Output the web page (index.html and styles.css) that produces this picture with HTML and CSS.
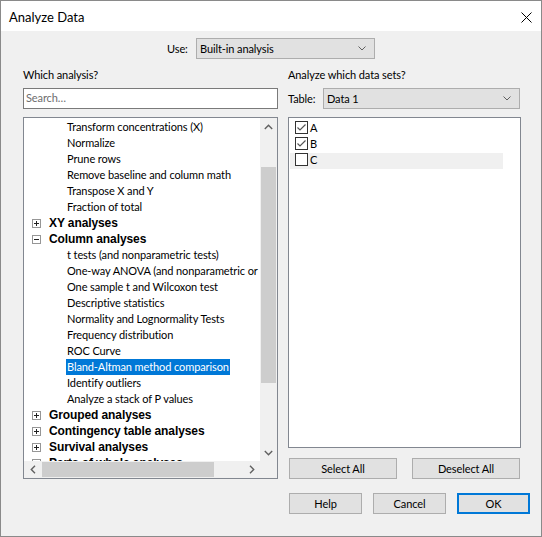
FILE: index.html
```html
<!DOCTYPE html>
<html lang="en">
<head>
<meta charset="utf-8">
<title>Analyze Data</title>
<link rel="stylesheet" href="styles.css">
</head>
<body>
<div class="window">
  <div class="titlebar">
    <span class="title">Analyze Data</span>
    <span class="close">
      <svg width="11" height="11" viewBox="0 0 11 11"><path d="M0.5 0.5 L10.5 10.5 M10.5 0.5 L0.5 10.5" stroke="#000" stroke-width="1" fill="none"/></svg>
    </span>
  </div>

  <div class="content">
    <div class="use-row">
      <span class="field-label use-label">Use:</span>
      <div class="combo use-combo">
        <span class="combo-text">Built-in analysis</span>
        <svg class="combo-arrow" width="8" height="5" viewBox="0 0 8 5"><path d="M0.5 0.5 L4 4 L7.5 0.5" stroke="#606060" stroke-width="1" fill="none"/></svg>
      </div>
    </div>

    <div class="columns">
      <div class="col col-left">
        <div class="caption">Which analysis?</div>
        <div class="search">Search…</div>
        <div class="tree">
          <div class="tree-main">
            <div class="tree-view">
              <div class="tree-items">
                <div class="row child"><span class="label">Transform concentrations (X)</span></div>
                <div class="row child"><span class="label">Normalize</span></div>
                <div class="row child"><span class="label">Prune rows</span></div>
                <div class="row child"><span class="label">Remove baseline and column math</span></div>
                <div class="row child"><span class="label">Transpose X and Y</span></div>
                <div class="row child"><span class="label">Fraction of total</span></div>
                <div class="row group">
                  <svg class="expander" width="9" height="9" viewBox="0 0 9 9"><rect x="0.5" y="0.5" width="8" height="8" fill="#fff" stroke="#969696"/><path d="M2 4.5 H7 M4.5 2 V7" stroke="#222" stroke-width="1"/></svg>
                  <span class="label">XY analyses</span>
                </div>
                <div class="row group">
                  <svg class="expander" width="9" height="9" viewBox="0 0 9 9"><rect x="0.5" y="0.5" width="8" height="8" fill="#fff" stroke="#969696"/><path d="M2 4.5 H7" stroke="#222" stroke-width="1"/></svg>
                  <span class="label">Column analyses</span>
                </div>
                <div class="row child"><span class="label">t tests (and nonparametric tests)</span></div>
                <div class="row child"><span class="label">One-way ANOVA (and nonparametric or mixed)</span></div>
                <div class="row child"><span class="label">One sample t and Wilcoxon test</span></div>
                <div class="row child"><span class="label">Descriptive statistics</span></div>
                <div class="row child"><span class="label">Normality and Lognormality Tests</span></div>
                <div class="row child"><span class="label">Frequency distribution</span></div>
                <div class="row child"><span class="label">ROC Curve</span></div>
                <div class="row child"><span class="label selected">Bland-Altman method comparison</span></div>
                <div class="row child"><span class="label">Identify outliers</span></div>
                <div class="row child"><span class="label">Analyze a stack of P values</span></div>
                <div class="row group">
                  <svg class="expander" width="9" height="9" viewBox="0 0 9 9"><rect x="0.5" y="0.5" width="8" height="8" fill="#fff" stroke="#969696"/><path d="M2 4.5 H7 M4.5 2 V7" stroke="#222" stroke-width="1"/></svg>
                  <span class="label">Grouped analyses</span>
                </div>
                <div class="row group">
                  <svg class="expander" width="9" height="9" viewBox="0 0 9 9"><rect x="0.5" y="0.5" width="8" height="8" fill="#fff" stroke="#969696"/><path d="M2 4.5 H7 M4.5 2 V7" stroke="#222" stroke-width="1"/></svg>
                  <span class="label">Contingency table analyses</span>
                </div>
                <div class="row group">
                  <svg class="expander" width="9" height="9" viewBox="0 0 9 9"><rect x="0.5" y="0.5" width="8" height="8" fill="#fff" stroke="#969696"/><path d="M2 4.5 H7 M4.5 2 V7" stroke="#222" stroke-width="1"/></svg>
                  <span class="label">Survival analyses</span>
                </div>
                <div class="row group">
                  <svg class="expander" width="9" height="9" viewBox="0 0 9 9"><rect x="0.5" y="0.5" width="8" height="8" fill="#fff" stroke="#969696"/><path d="M2 4.5 H7 M4.5 2 V7" stroke="#222" stroke-width="1"/></svg>
                  <span class="label">Parts of whole analyses</span>
                </div>
              </div>
            </div>
            <div class="vscroll">
              <div class="sb-btn">
                <svg width="9" height="6" viewBox="0 0 9 6"><path d="M0.8 5 L4.5 1.3 L8.2 5" stroke="#606060" stroke-width="1.4" fill="none"/></svg>
              </div>
              <div class="sb-track vtrack"><div class="vthumb"></div></div>
              <div class="sb-btn">
                <svg width="9" height="6" viewBox="0 0 9 6"><path d="M0.8 1 L4.5 4.7 L8.2 1" stroke="#606060" stroke-width="1.4" fill="none"/></svg>
              </div>
            </div>
          </div>
          <div class="tree-bottom">
            <div class="hscroll">
              <div class="sb-btn">
                <svg width="6" height="9" viewBox="0 0 6 9"><path d="M5 0.8 L1.3 4.5 L5 8.2" stroke="#606060" stroke-width="1.4" fill="none"/></svg>
              </div>
              <div class="sb-track htrack"><div class="hthumb"></div></div>
              <div class="sb-btn">
                <svg width="6" height="9" viewBox="0 0 6 9"><path d="M1 0.8 L4.7 4.5 L1 8.2" stroke="#606060" stroke-width="1.4" fill="none"/></svg>
              </div>
            </div>
            <div class="corner"></div>
          </div>
        </div>
      </div>

      <div class="col col-right">
        <div class="caption">Analyze which data sets?</div>
        <div class="table-row">
          <span class="field-label table-label">Table:</span>
          <div class="combo table-combo">
            <span class="combo-text">Data 1</span>
            <svg class="combo-arrow" width="8" height="5" viewBox="0 0 8 5"><path d="M0.5 0.5 L4 4 L7.5 0.5" stroke="#606060" stroke-width="1" fill="none"/></svg>
          </div>
        </div>
        <div class="data-list">
          <div class="check-row">
            <span class="checkbox"><svg width="11" height="11" viewBox="0 0 11 11"><path d="M1.5 5.5 L4 8 L9.5 2.5" stroke="#555" stroke-width="1.2" fill="none"/></svg></span>
            <span class="check-label">A</span>
          </div>
          <div class="check-row">
            <span class="checkbox"><svg width="11" height="11" viewBox="0 0 11 11"><path d="M1.5 5.5 L4 8 L9.5 2.5" stroke="#555" stroke-width="1.2" fill="none"/></svg></span>
            <span class="check-label">B</span>
          </div>
          <div class="check-row hot">
            <span class="checkbox"></span>
            <span class="check-label">C</span>
          </div>
        </div>
        <div class="list-buttons">
          <button class="btn wide">Select All</button>
          <button class="btn wide">Deselect All</button>
        </div>
      </div>
    </div>

    <div class="footer">
      <button class="btn">Help</button>
      <button class="btn">Cancel</button>
      <button class="btn default">OK</button>
    </div>
  </div>
</div>
</body>
</html>
```

FILE: styles.css
```css
* {
  box-sizing: border-box;
}

html, body {
  margin: 0;
  padding: 0;
  background: #f0f0f0;
}

body {
  font-family: Lato, "Liberation Sans", sans-serif;
  font-size: 11px;
  letter-spacing: -0.1px;
  color: #000;
}

.window {
  width: 542px;
  height: 537px;
  border: 1px solid #8a8a8a;
  background: #f0f0f0;
  display: flex;
  flex-direction: column;
}

/* title bar */
.titlebar {
  height: 30px;
  background: #fff;
  display: flex;
  align-items: center;
  justify-content: space-between;
  padding: 0 9px 0 8px;
  flex: none;
}

.title {
  font-size: 13px;
  letter-spacing: 0;
  line-height: 16px;
  padding-top: 1px;
}

.close {
  display: flex;
  width: 11px;
  height: 11px;
  margin-top: 2px;
}

/* dialog body */
.content {
  padding: 7px 11px 0 22px;
  flex: 1;
  display: flex;
  flex-direction: column;
}

.use-row {
  display: flex;
  align-items: center;
  padding-left: 144px;
  height: 21px;
}

.field-label {
  line-height: 16px;
  flex: none;
}

.use-label {
  width: 29px;
}

.combo {
  height: 21px;
  background: #e1e1e1;
  border: 1px solid #adadad;
  display: flex;
  align-items: center;
  justify-content: space-between;
  padding: 0 8px 0 3px;
}

.use-combo {
  width: 179px;
}

.table-combo {
  width: 197px;
}

.combo-text {
  line-height: 16px;
}

.combo-arrow {
  display: block;
}

.columns {
  display: flex;
  gap: 10px;
  margin-top: 8px;
  height: 412px;
}

.col {
  display: flex;
  flex-direction: column;
}

.col-left {
  width: 255px;
}

.col-right {
  width: 233px;
}

.caption {
  height: 16px;
  line-height: 16px;
  margin-bottom: 5px;
}

.search {
  height: 21px;
  border: 1px solid #7a7a7a;
  background: #fff;
  color: #6d6d6d;
  line-height: 18px;
  padding-left: 2px;
  margin-bottom: 8px;
}

/* analysis tree */
.tree {
  height: 362px;
  border: 1px solid #828790;
  background: #fff;
  display: flex;
  flex-direction: column;
}

.tree-main {
  flex: 1;
  display: flex;
  min-height: 0;
}

.tree-view {
  flex: 1;
  overflow: hidden;
  position: relative;
}

.tree-items {
  padding-top: 1px;
}

.row {
  height: 16px;
  display: flex;
  align-items: center;
  white-space: nowrap;
}

.row.child {
  padding-left: 42px;
}

.row.group {
  padding-left: 8px;
}

.row.group .label {
  font-family: "Liberation Sans", Arial, sans-serif;
  font-size: 12px;
  font-weight: bold;
  margin-left: 7px;
}

.expander {
  display: block;
  flex: none;
}

.label {
  display: inline-block;
  line-height: 16px;
  padding: 0 1px;
}

.label.selected {
  background: #0078d7;
  color: #fff;
}

/* scroll bars */
.vscroll {
  width: 17px;
  flex: none;
  background: #f0f0f0;
  display: flex;
  flex-direction: column;
}

.sb-btn {
  width: 17px;
  height: 17px;
  flex: none;
  display: flex;
  align-items: center;
  justify-content: center;
}

.sb-btn svg {
  display: block;
}

.sb-track {
  flex: 1;
  display: flex;
}

.vtrack {
  flex-direction: column;
  padding: 32px 1px 0;
}

.vthumb {
  height: 216px;
  background: #cdcdcd;
  flex: none;
}

.tree-bottom {
  height: 17px;
  flex: none;
  display: flex;
}

.hscroll {
  flex: 1;
  display: flex;
  background: #f0f0f0;
}

.htrack {
  padding: 1px 0 1px 1px;
}

.hthumb {
  width: 172px;
  background: #cdcdcd;
  flex: none;
}

.corner {
  width: 17px;
  background: #f0f0f0;
}

/* data set list */
.table-row {
  display: flex;
  align-items: center;
  height: 21px;
  margin-bottom: 8px;
}

.table-label {
  width: 35px;
}

.data-list {
  height: 331px;
  border: 1px solid #828790;
  background: #fff;
  padding: 3px 17px 0 1px;
}

.check-row {
  height: 16px;
  display: flex;
  align-items: flex-start;
  padding-left: 5px;
}

.check-row.hot {
  background: #f0f0f0;
}

.checkbox {
  width: 13px;
  height: 13px;
  border: 1px solid #333;
  background: #fff;
  display: block;
  flex: none;
}

.checkbox svg {
  display: block;
}

.check-label {
  margin-left: 2px;
  line-height: 13px;
}

/* buttons */
.list-buttons {
  display: flex;
  justify-content: space-between;
  padding: 0 1px;
  margin-top: 10px;
}

.btn {
  font: inherit;
  letter-spacing: inherit;
  color: #000;
  height: 21px;
  width: 73px;
  background: #e1e1e1;
  border: 1px solid #adadad;
  padding: 0;
  line-height: 17px;
}

.btn.wide {
  width: 108px;
}

.btn.default {
  border: 2px solid #0078d7;
}

.footer {
  display: flex;
  justify-content: flex-end;
  gap: 11px;
  margin-top: 14px;
}
```
